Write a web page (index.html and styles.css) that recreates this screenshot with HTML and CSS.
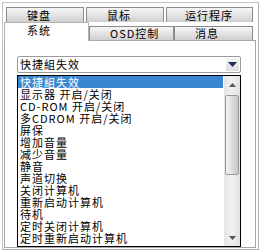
FILE: index.html
```html
<!DOCTYPE html>
<html>
<head>
<meta charset="utf-8">
<link rel="stylesheet" href="styles.css">
</head>
<body>
<div class="frame">
  <div class="tabs">
    <div class="row r1">
      <div class="tab t1">键盘</div>
      <div class="tab t2">鼠标</div>
      <div class="tab t3">运行程序</div>
    </div>
    <div class="row r2">
      <div class="tab sel">系统</div>
      <div class="tab t5">OSD控制</div>
      <div class="tab t6">消息</div>
    </div>
  </div>
  <div class="panel">
    <div class="combo">
      <span class="value">快捷組失效</span>
      <div class="dropbtn"><svg width="9" height="5" viewBox="0 0 9 5"><path d="M0 0H9L4.5 5Z" fill="#1c2a56"/></svg></div>
    </div>
    <div class="list">
      <ul class="items">
        <li class="active">快捷組失效</li>
        <li>显示器 开启/关闭</li>
        <li>CD-ROM 开启/关闭</li>
        <li>多CDROM 开启/关闭</li>
        <li>屏保</li>
        <li>增加音量</li>
        <li>减少音量</li>
        <li>静音</li>
        <li>声道切换</li>
        <li>关闭计算机</li>
        <li>重新启动计算机</li>
        <li>待机</li>
        <li>定时关闭计算机</li>
        <li>定时重新启动计算机</li>
      </ul>
      <div class="scroll">
        <div class="arrow up"><svg width="7" height="4" viewBox="0 0 7 4"><path d="M0 4H7L3.5 0Z" fill="#555"/></svg></div>
        <div class="thumb"></div>
        <div class="track"></div>
        <div class="arrow down"><svg width="7" height="4" viewBox="0 0 7 4"><path d="M0 0H7L3.5 4Z" fill="#555"/></svg></div>
      </div>
    </div>
  </div>
</div>
</body>
</html>
```

FILE: styles.css
```css
* { box-sizing: border-box; }
html, body { margin: 0; padding: 0; background: #fff; }
body {
  width: 260px;
  height: 250px;
  overflow: hidden;
  font-family: "Noto Sans CJK SC", "Noto Sans", sans-serif;
  font-size: 11px;
  letter-spacing: 1px;
  color: #000;
}
.frame {
  margin: 2px 0 0 2px;
  width: 257px;
  height: 248px;
  border: 1px solid #c4c4c4;
  border-right-color: #b0b0b0;
  border-bottom-color: #b0b0b0;
}
.tabs { padding-top: 4px; }
.row { display: flex; }
.r1 { margin-left: 3px; height: 15px; gap: 2px; }
.r2 { margin-left: 1px; height: 18px; align-items: flex-end; position: relative; z-index: 1; }
.tab {
  height: 15px;
  line-height: 14px;
  padding-left: 20px;
  border: 1px solid #8c8c8c;
  border-bottom: none;
  background: linear-gradient(#f6f6f6, #dcdcdc 70%, #cfcfcf);
  white-space: nowrap;
}
.t1 { width: 78px; }
.t2 { width: 78px; }
.t3 { width: 87px; padding-left: 18px; }
.r2 .tab { height: 14px; line-height: 13px; }
.sel {
  width: 85px;
  height: 19px !important;
  padding-left: 22px;
  line-height: 15px !important;
  background: #fff;
  border-color: #b4b4b4;
  margin-bottom: -1px;
}
.t5 { width: 85px; }
.t6 { width: 79px; }
.panel {
  margin-left: 1px;
  width: 252px;
  height: 208px;
  border: 1px solid #a8a8a8;
  padding: 15px 0 0 12px;
  background: #fff;
}
.combo {
  width: 224px;
  height: 17px;
  border: 1px solid #9a9a9a;
  border-radius: 2px;
  display: flex;
  align-items: center;
  padding-left: 2px;
  background: #fff;
}
.value { flex: 1; line-height: 15px; }
.dropbtn {
  width: 13px;
  height: 13px;
  margin-right: 1px;
  background: linear-gradient(#f4f4f4, #dedede);
  display: flex;
  align-items: center;
  justify-content: center;
}
.list {
  margin-top: 2px;
  width: 224px;
  height: 172px;
  border: 1px solid #000;
  display: flex;
  overflow: hidden;
}
.items {
  list-style: none;
  margin: 0;
  padding: 0;
  width: 205px;
}
.items li {
  height: 12px;
  line-height: 12px;
  padding-left: 2px;
  white-space: nowrap;
}
.items li.active { background: #3987d0; color: #fff; }
.scroll {
  margin-left: 1px;
  width: 16px;
  display: flex;
  flex-direction: column;
  background: linear-gradient(90deg, #e6e6e6, #f0f0f0 50%, #e2e2e2);
}
.arrow {
  height: 17px;
  display: flex;
  align-items: center;
  justify-content: center;
}
.thumb {
  margin: 2px 1px 0 1px;
  height: 80px;
  border: 1px solid #9a9a9a;
  border-radius: 2px;
  background: linear-gradient(90deg, #f4f4f4, #dadada 60%, #c6c6c6);
}
.track { flex: 1; }
```
